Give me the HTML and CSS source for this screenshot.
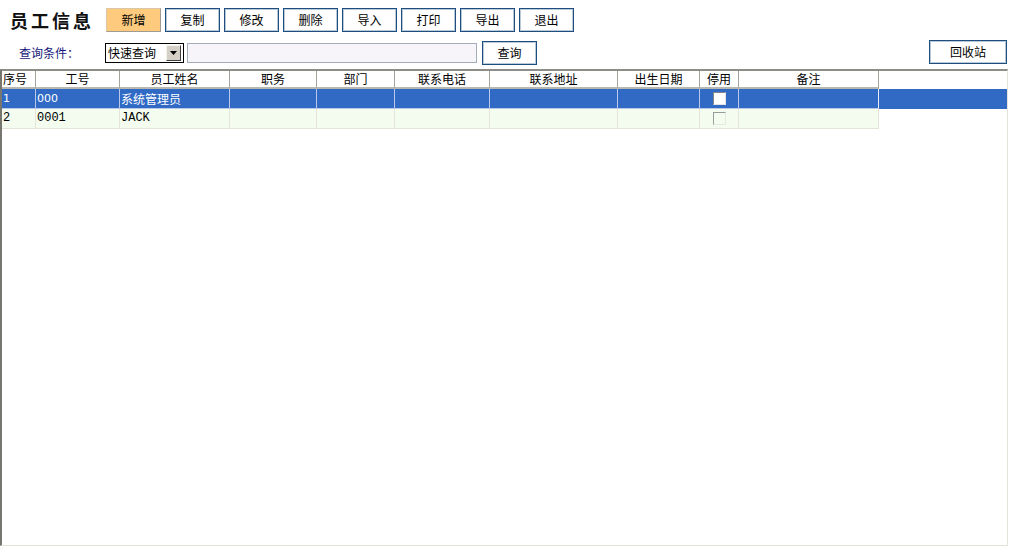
FILE: index.html
```html
<!DOCTYPE html>
<html lang="zh-CN">
<head>
<meta charset="utf-8">
<title>员工信息</title>
<link rel="stylesheet" href="styles.css">
</head>
<body>
<div class="toolbar">
  <div class="title">员工信息</div>
  <div class="btns">
    <button class="btn btn-primary">新增</button>
    <button class="btn">复制</button>
    <button class="btn">修改</button>
    <button class="btn">删除</button>
    <button class="btn">导入</button>
    <button class="btn">打印</button>
    <button class="btn">导出</button>
    <button class="btn">退出</button>
  </div>
</div>
<div class="query">
  <div class="label">查询条件：</div>
  <div class="select"><span class="select-text">快速查询</span><span class="select-btn"><svg width="7" height="4" viewBox="0 0 7 4"><path d="M0 0H7L3.5 4Z" fill="#000"/></svg></span></div>
  <div class="input"></div>
  <button class="btn btn-query">查询</button>
  <div class="spacer"></div>
  <button class="btn btn-recycle">回收站</button>
</div>
<div class="grid">
  <div class="row head">
    <div class="c c1 left">序号</div>
    <div class="c c2">工号</div>
    <div class="c c3">员工姓名</div>
    <div class="c c4">职务</div>
    <div class="c c5">部门</div>
    <div class="c c6">联系电话</div>
    <div class="c c7">联系地址</div>
    <div class="c c8">出生日期</div>
    <div class="c c9">停用</div>
    <div class="c c10">备注</div>
    <div class="fill"></div>
  </div>
  <div class="row data sel">
    <div class="c c1">1</div>
    <div class="c c2">000</div>
    <div class="c c3">系统管理员</div>
    <div class="c c4"></div>
    <div class="c c5"></div>
    <div class="c c6"></div>
    <div class="c c7"></div>
    <div class="c c8"></div>
    <div class="c c9 chk"><span class="box"></span></div>
    <div class="c c10"></div>
    <div class="fill"></div>
  </div>
  <div class="row data alt">
    <div class="c c1 mono">2</div>
    <div class="c c2 mono">0001</div>
    <div class="c c3 mono">JACK</div>
    <div class="c c4"></div>
    <div class="c c5"></div>
    <div class="c c6"></div>
    <div class="c c7"></div>
    <div class="c c8"></div>
    <div class="c c9 chk"><span class="box"></span></div>
    <div class="c c10"></div>
    <div class="fill"></div>
  </div>
</div>
</body>
</html>
```
FILE: styles.css
```css
* { box-sizing: border-box; }
html, body { margin: 0; padding: 0; background: #fff; }
body {
  width: 1010px;
  height: 553px;
  overflow: hidden;
  font-family: "Noto Sans CJK SC", "Liberation Sans", sans-serif;
  font-size: 12px;
  color: #000;
}
.toolbar {
  display: flex;
  align-items: center;
  padding: 8px 0 0 10px;
  height: 32px;
}
.title {
  width: 96px;
  font-size: 18px;
  font-weight: 700;
  letter-spacing: 3px;
  line-height: 24px;
  color: #111;
}
.btns { display: flex; gap: 4px; }
.btn {
  width: 55px;
  height: 24px;
  padding: 0;
  margin: 0;
  background: #fff;
  border: 1px solid #1e4e7e;
  box-shadow: inset 0 0 0 1px rgba(30, 78, 126, 0.3);
  font-family: "Noto Sans CJK SC", sans-serif;
  font-size: 12px;
  line-height: 20px;
  color: #000;
}
.btn-primary {
  background: #fdca7e;
  border: 1px solid #d9c7a8;
  border-right-color: #a09a90;
  border-bottom-color: #a09a90;
  box-shadow: none;
}
.query {
  display: flex;
  align-items: center;
  margin-top: 8px;
  height: 26px;
}
.label {
  width: 105px;
  padding-left: 19px;
  color: #16167a;
  line-height: 16px;
}
.select {
  width: 79px;
  height: 20px;
  border: 1px solid #000;
  display: flex;
  align-items: center;
  justify-content: space-between;
  padding: 0 2px 0 2px;
  background: #fff;
}
.select-text { line-height: 16px; }
.select-btn {
  width: 15px;
  height: 16px;
  background: #d4d0c8;
  border: 1px solid;
  border-color: #f4f3ee #404040 #404040 #f4f3ee;
  display: flex;
  align-items: center;
  justify-content: center;
}
.input {
  width: 290px;
  height: 20px;
  margin-left: 3px;
  background: #f8f5fa;
  border: 1px solid #a3acb8;
}
.btn-query { margin-left: 5px; }
.spacer { flex: 1; }
.btn-recycle {
  width: 78px;
  margin-right: 3px;
  align-self: flex-start;
}
.grid {
  margin-top: 3px;
  width: 1008px;
  height: 477px;
  border-top: 2px solid #8e8e88;
  border-left: 2px solid #77776f;
  border-right: 1px solid #e6e3da;
  border-bottom: 1px solid #e6e3da;
  background: #fff;
}
.row { display: flex; }
.c {
  flex: none;
  overflow: hidden;
  white-space: nowrap;
  padding-left: 1px;
}
.c1 { width: 34px; }
.c2 { width: 84px; }
.c3 { width: 110px; }
.c4 { width: 87px; }
.c5 { width: 78px; }
.c6 { width: 95px; }
.c7 { width: 128px; }
.c8 { width: 82px; }
.c9 { width: 39px; }
.c10 { width: 140px; }
.fill { flex: 1; }
.head .c {
  height: 18px;
  line-height: 16px;
  text-align: center;
  background: #fff;
  border-right: 1px solid #a3a39b;
  border-bottom: 2px solid #b9b8b0;
  padding-left: 0;
}
.head .c.left { text-align: left; padding-left: 1px; }
.data .c {
  height: 20px;
  line-height: 19px;
  border-right: 1px solid #e6e3d9;
  border-bottom: 1px solid #e6e3d9;
}
.sel { background: #316ac5; color: #fff; }
.sel .c {
  border-right-color: #b8c8e6;
  border-bottom-color: #b8c8e6;
  font-family: "DejaVu Sans", "Noto Sans CJK SC", sans-serif;
  font-size: 11px;
}
.sel .c3 { font-family: "Noto Sans CJK SC", sans-serif; font-size: 12px; }
.sel .c10 { border-right-color: #e8ecf4; }
.alt .c { background: #f3fcef; }
.mono { font-family: "Liberation Mono", monospace; font-size: 12px; }
.chk {
  display: flex;
  align-items: center;
  justify-content: center;
  padding-left: 0;
}
.box {
  width: 13px;
  height: 13px;
  border: 1px solid;
  border-color: #848484 #e4e4e4 #e4e4e4 #848484;
  background: #fff;
}
.alt .box {
  border-color: #9a9a9a #e8e8e0 #e8e8e0 #9a9a9a;
  background: #f3fcef;
}
```
